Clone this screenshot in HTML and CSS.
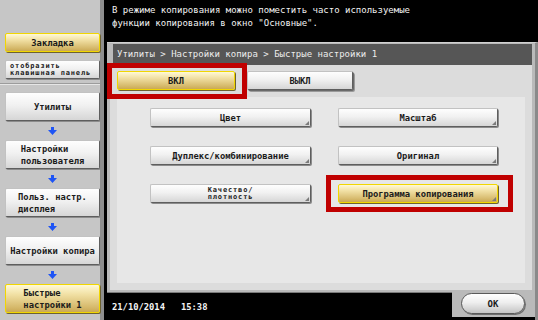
FILE: index.html
```html
<!DOCTYPE html>
<html lang="ru">
<head>
<meta charset="utf-8">
<title>Быстрые настройки 1</title>
<link rel="stylesheet" href="styles.css">
</head>
<body>
<aside class="sidebar">
  <div class="side-top">
    <div class="btn yellow side-btn short">Закладка</div>
    <div class="btn side-btn short tiny"><span class="lbl">отобразить<br>клавишная панель</span></div>
  </div>
  <div class="side-nav">
    <div class="btn side-btn">Утилиты</div>
    <div class="arrow"><svg width="9" height="8" viewBox="0 0 9 8"><path d="M3 0h3v3h3L4.5 8 0 3h3z" fill="#1f55f5"/></svg></div>
    <div class="btn side-btn"><span class="lbl">Настройки<br>пользователя</span></div>
    <div class="arrow"><svg width="9" height="8" viewBox="0 0 9 8"><path d="M3 0h3v3h3L4.5 8 0 3h3z" fill="#1f55f5"/></svg></div>
    <div class="btn side-btn"><span class="lbl">Польз. настр.<br>дисплея</span></div>
    <div class="arrow"><svg width="9" height="8" viewBox="0 0 9 8"><path d="M3 0h3v3h3L4.5 8 0 3h3z" fill="#1f55f5"/></svg></div>
    <div class="btn side-btn">Настройки копира</div>
    <div class="arrow"><svg width="9" height="8" viewBox="0 0 9 8"><path d="M3 0h3v3h3L4.5 8 0 3h3z" fill="#1f55f5"/></svg></div>
    <div class="btn yellow side-btn"><span class="lbl">Быстрые<br>настройки 1</span></div>
  </div>
</aside>
<main class="main">
  <div class="message">В режиме копирования можно поместить часто используемые<br>функции копирования в окно "Основные".</div>
  <section class="panel">
    <div class="crumbs">Утилиты &gt; Настройки копира &gt; Быстрые настройки 1</div>
    <div class="content">
      <div class="toggles">
        <div class="btn yellow toggle on marked">ВКЛ</div>
        <div class="btn toggle off">ВЫКЛ</div>
      </div>
      <div class="box">
        <div class="grid">
          <div class="btn opt sub">Цвет</div>
          <div class="btn opt sub">Масштаб</div>
          <div class="btn opt sub">Дуплекс/комбинирование</div>
          <div class="btn opt sub">Оригинал</div>
          <div class="btn opt sub tiny"><span class="lbl c">Качество/<br>плотность</span></div>
          <div class="btn yellow opt sub marked2">Программа копирования</div>
        </div>
      </div>
    </div>
    <div class="bottom">
      <div class="status"><span>21/10/2014</span><span>15:38</span></div>
      <div class="okarea"><div class="okbtn">OK</div></div>
    </div>
  </section>
</main>
</body>
</html>
```
FILE: styles.css
```css
html, body {
  margin: 0;
  padding: 0;
}
body {
  width: 538px;
  height: 320px;
  background: #000;
  display: flex;
  overflow: hidden;
  font-family: "DejaVu Sans Mono", "Liberation Mono", monospace;
  color: #1b1b1b;
}
.sidebar {
  width: 100px;
  height: 320px;
  background: #c6c6c6;
  border-right: 4px solid #8e8e8e;
  display: flex;
  flex-direction: column;
  flex-shrink: 0;
}
.side-top {
  height: 84px;
  box-sizing: border-box;
  padding: 33px 0 0 5px;
  display: flex;
  flex-direction: column;
  gap: 8px;
  border-bottom: 1px solid #9c9c9c;
  box-shadow: 0 1px 0 #e6e6e6;
}
.side-nav {
  padding: 8px 0 0 5px;
  display: flex;
  flex-direction: column;
}
.btn {
  position: relative;
  box-sizing: border-box;
  display: flex;
  align-items: center;
  justify-content: center;
  font-weight: bold;
  font-size: 8.8px;
  white-space: nowrap;
  background: linear-gradient(#fefefe, #f1f1f1 45%, #d6d6d6);
  border: 1px solid #c2c2c2;
  border-right-color: #5e5e5e;
  border-bottom-color: #5e5e5e;
  box-shadow: 1px 1px 0 #8c8c8c;
  border-radius: 2px;
}
.btn.yellow {
  background: linear-gradient(#fff9d6, #f1e0a4 35%, #d7bb6e 80%, #caa955);
  border: 1px solid #f1d600;
  box-shadow: 1px 1px 0 #6e6230;
}
.side-btn {
  width: 95px;
  height: 29px;
}
.side-btn.short {
  height: 19px;
}
.lbl {
  display: inline-block;
  text-align: left;
  line-height: 12px;
}
.lbl.c {
  text-align: center;
}
.tiny {
  font-size: 7px;
  letter-spacing: 0.85px;
}
.tiny .lbl {
  line-height: 7px;
}
.side-top .tiny {
  justify-content: flex-start;
  padding-left: 4px;
}
.arrow {
  width: 95px;
  height: 19px;
  display: flex;
  align-items: center;
  justify-content: center;
}
.main {
  margin-left: 3px;
  width: 431px;
  display: flex;
  flex-direction: column;
}
.message {
  height: 42px;
  box-sizing: border-box;
  padding: 4px 0 0 5px;
  color: #f2f2f2;
  font-size: 9px;
  line-height: 12.5px;
  white-space: nowrap;
}
.panel {
  flex: 1;
  display: flex;
  flex-direction: column;
  background: #bababa;
  border-top: 1px solid #d0d0d0;
  border-right: 3px solid #8a8a8a;
  padding: 1px 3px 0 3px;
}
.crumbs {
  margin-left: 3px;
  height: 21px;
  line-height: 21px;
  background: #565656;
  color: #ececec;
  font-size: 9px;
  padding-left: 4px;
  white-space: nowrap;
}
.content {
  height: 225px;
  box-sizing: border-box;
  background: #dcdcdc;
  padding: 6px 7px 7px 7px;
  display: flex;
  flex-direction: column;
}
.toggles {
  display: flex;
  height: 19px;
}
.toggle.on {
  width: 118px;
}
.toggle.off {
  width: 106px;
  margin-left: 12px;
  box-shadow: 1px 1px 0 #6a6a6a, 2px 2px 0 #9a9a9a;
}
.marked::after {
  content: "";
  position: absolute;
  top: -9px;
  left: -11px;
  right: -13px;
  bottom: -10px;
  border: 5px solid #c00000;
}
.box {
  margin-top: 7px;
  flex: 1;
  background: #e7e7e7;
  padding: 11px 0 0 33px;
}
.grid {
  display: grid;
  grid-template-columns: 161px 160px;
  grid-auto-rows: 19px;
  column-gap: 27px;
  row-gap: 19px;
}
.opt {
  height: 19px;
}
.sub::before {
  content: "";
  position: absolute;
  right: 1px;
  bottom: 1px;
  width: 0;
  height: 0;
  border-left: 4px solid transparent;
  border-bottom: 4px solid #7b7b7b;
}
.marked2::after {
  content: "";
  position: absolute;
  top: -10px;
  left: -13px;
  right: -16px;
  bottom: -10px;
  border: 5px solid #c00000;
}
.bottom {
  display: flex;
  margin: 2px -3px 0 -3px;
  flex: 1;
}
.status {
  width: 345px;
  background: #000;
  color: #f4f4f4;
  font-weight: bold;
  font-size: 8.8px;
  display: flex;
  align-items: center;
  gap: 16px;
  padding-left: 5px;
  box-sizing: border-box;
  border-top: 1px solid #7a7a7a;
}
.okarea {
  flex: 1;
  border-bottom: 3px solid #000;
  padding: 1px 0 0 9px;
}
.okbtn {
  width: 64px;
  height: 21px;
  box-sizing: border-box;
  border: 1px solid #5a5a5a;
  border-radius: 11px;
  background: linear-gradient(#ffffff, #eeeeee 45%, #c4c4c4);
  box-shadow: 1px 1px 0 #6e6e6e;
  display: flex;
  align-items: center;
  justify-content: center;
  font-weight: bold;
  font-size: 9px;
}
```
